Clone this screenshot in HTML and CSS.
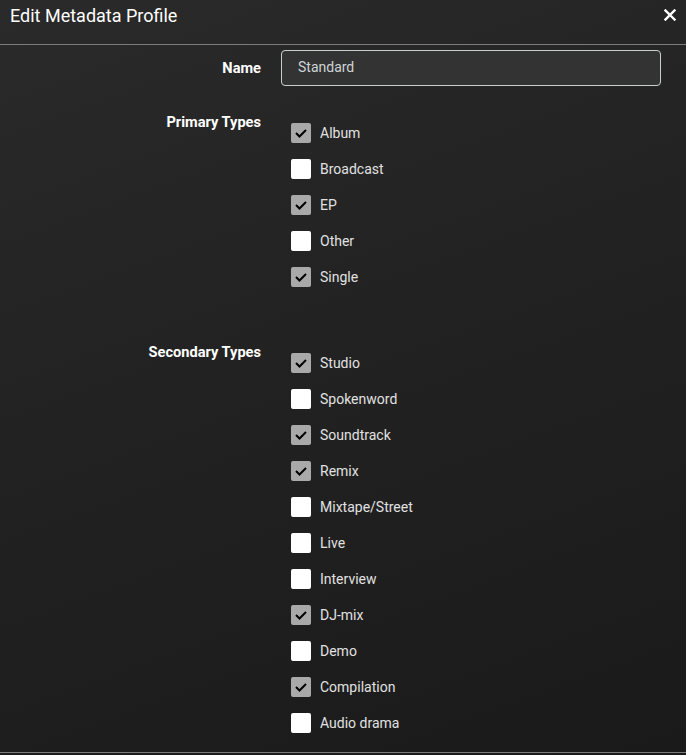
FILE: index.html
```html
<!DOCTYPE html>
<html>
<head>
<meta charset="utf-8">
<link rel="stylesheet" href="styles.css">
</head>
<body>
<div class="modal">
  <div class="header">
    <div class="title">Edit Metadata Profile</div>
    <button class="close" aria-label="Close">
      <svg width="12" height="12" viewBox="0 0 12 12"><path d="M1.5 1.5 L10.5 10.5 M10.5 1.5 L1.5 10.5" stroke="#fff" stroke-width="2.4" stroke-linecap="square"/></svg>
    </button>
  </div>
  <div class="body">
    <div class="group group-name">
      <label class="label">Name</label>
      <div class="field"><div class="input">Standard</div></div>
    </div>
    <div class="group group-types">
      <label class="label">Primary Types</label>
      <div class="field list">
        <div class="item"><span class="cb on"><svg viewBox="0 0 20 20"><path d="M5 10 L8.5 13.5 L15 7" /></svg></span><span class="txt">Album</span></div>
        <div class="item"><span class="cb"></span><span class="txt">Broadcast</span></div>
        <div class="item"><span class="cb on"><svg viewBox="0 0 20 20"><path d="M5 10 L8.5 13.5 L15 7" /></svg></span><span class="txt">EP</span></div>
        <div class="item"><span class="cb"></span><span class="txt">Other</span></div>
        <div class="item"><span class="cb on"><svg viewBox="0 0 20 20"><path d="M5 10 L8.5 13.5 L15 7" /></svg></span><span class="txt">Single</span></div>
      </div>
    </div>
    <div class="group group-types">
      <label class="label">Secondary Types</label>
      <div class="field list">
        <div class="item"><span class="cb on"><svg viewBox="0 0 20 20"><path d="M5 10 L8.5 13.5 L15 7" /></svg></span><span class="txt">Studio</span></div>
        <div class="item"><span class="cb"></span><span class="txt">Spokenword</span></div>
        <div class="item"><span class="cb on"><svg viewBox="0 0 20 20"><path d="M5 10 L8.5 13.5 L15 7" /></svg></span><span class="txt">Soundtrack</span></div>
        <div class="item"><span class="cb on"><svg viewBox="0 0 20 20"><path d="M5 10 L8.5 13.5 L15 7" /></svg></span><span class="txt">Remix</span></div>
        <div class="item"><span class="cb"></span><span class="txt">Mixtape/Street</span></div>
        <div class="item"><span class="cb"></span><span class="txt">Live</span></div>
        <div class="item"><span class="cb"></span><span class="txt">Interview</span></div>
        <div class="item"><span class="cb on"><svg viewBox="0 0 20 20"><path d="M5 10 L8.5 13.5 L15 7" /></svg></span><span class="txt">DJ-mix</span></div>
        <div class="item"><span class="cb"></span><span class="txt">Demo</span></div>
        <div class="item"><span class="cb on"><svg viewBox="0 0 20 20"><path d="M5 10 L8.5 13.5 L15 7" /></svg></span><span class="txt">Compilation</span></div>
        <div class="item"><span class="cb"></span><span class="txt">Audio drama</span></div>
      </div>
    </div>
  </div>
  <div class="footer"></div>
</div>
</body>
</html>
```

FILE: styles.css
```css
html, body {
  margin: 0;
  padding: 0;
  height: 100%;
}
body {
  background: linear-gradient(160deg, #2a2a2a 0%, #222222 45%, #1a1a1a 100%);
  font-family: Roboto, "Noto Sans", "Liberation Sans", sans-serif;
  color: #fff;
  overflow: hidden;
}
.modal {
  display: flex;
  flex-direction: column;
}
.header {
  height: 44px;
  display: flex;
  justify-content: space-between;
  align-items: flex-start;
  border-bottom: 1px solid #7c7c7c;
}
.title {
  font-size: 18px;
  line-height: 32px;
  padding-left: 10px;
  color: #fff;
}
.close {
  background: none;
  border: 0;
  padding: 0;
  margin: 9px 10px 0 0;
  width: 12px;
  height: 12px;
  display: flex;
}
.body {
  padding: 5px 25px 0 0;
  height: 702px;
  overflow: hidden;
}
.group {
  display: flex;
  gap: 20px;
}
.label {
  width: 261px;
  flex: none;
  text-align: right;
  font-weight: bold;
  font-size: 14.6px;
  line-height: 15px;
  color: #fff;
}
.field {
  flex: 1;
}
.group-name {
  align-items: center;
  margin-bottom: 29px;
}
.input {
  height: 34px;
  border: 1px solid #c9cfcf;
  border-radius: 4px;
  background: #333333;
  color: #cfd3d6;
  font-size: 14px;
  line-height: 33px;
  padding-left: 16px;
}
.group-types {
  margin-bottom: 50px;
}
.list {
  display: flex;
  flex-direction: column;
  padding-left: 10px;
}
.item {
  height: 36px;
  display: flex;
  align-items: center;
  gap: 9px;
}
.cb {
  width: 20px;
  height: 20px;
  border-radius: 2px;
  background: #fff;
  display: block;
  flex: none;
}
.cb.on {
  background: #a9a9a9;
}
.cb svg {
  width: 20px;
  height: 20px;
  display: block;
}
.cb svg path {
  fill: none;
  stroke: #000;
  stroke-width: 2;
}
.txt {
  font-size: 14px;
  color: #e1e1e1;
}
.footer {
  border-top: 1px solid #7c7c7c;
  height: 10px;
}
```
